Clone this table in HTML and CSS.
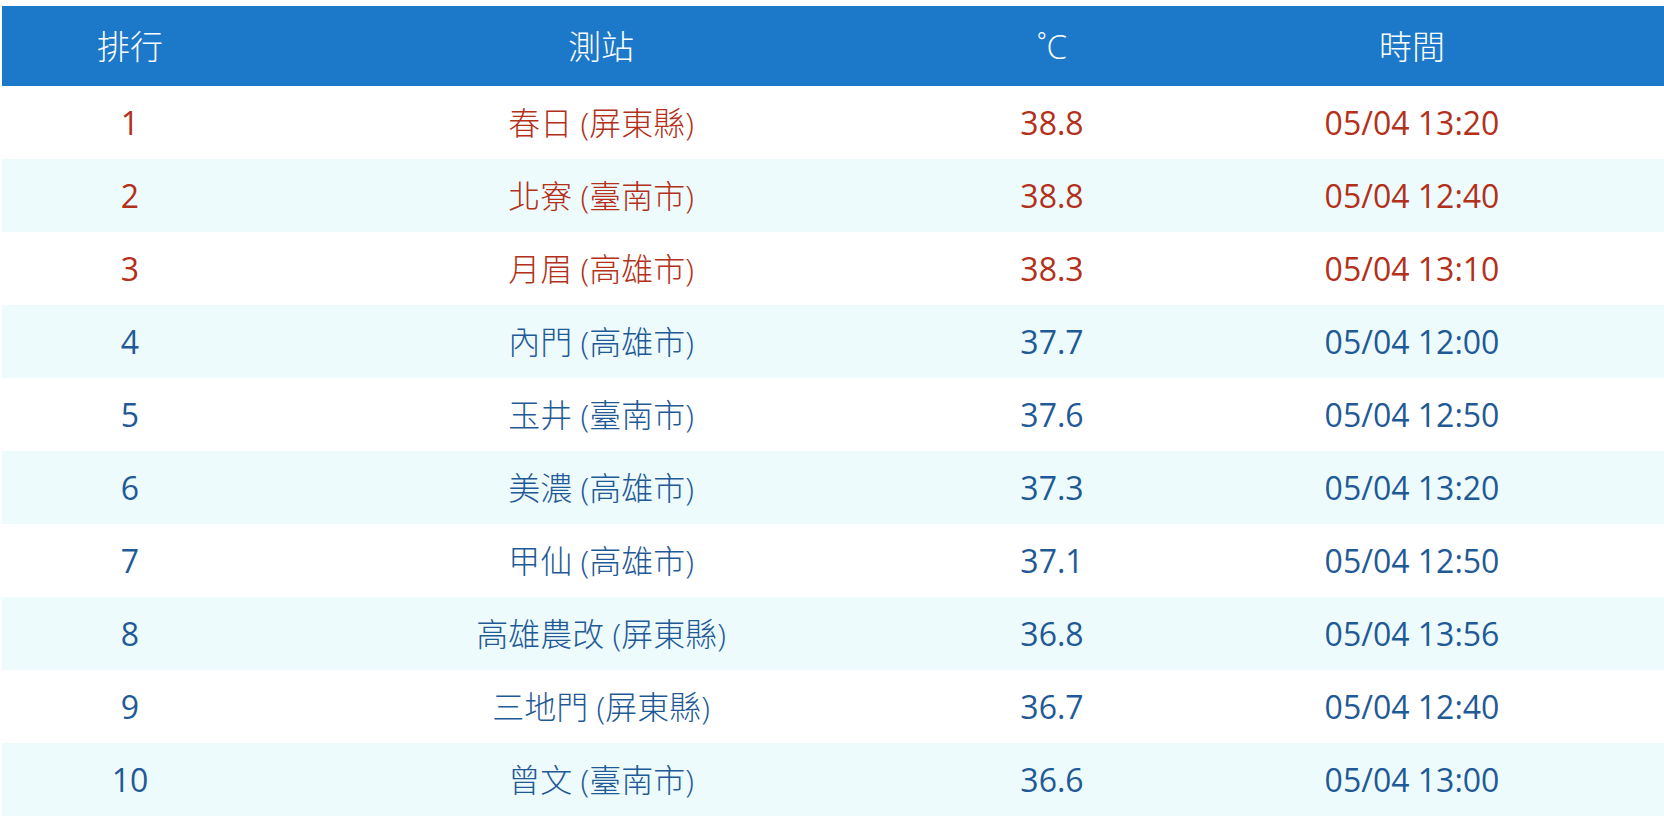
FILE: index.html
```html
<!DOCTYPE html>
<html lang="zh-Hant">
<head>
<meta charset="utf-8">
<title>排行</title>
<link rel="stylesheet" href="styles.css">
</head>
<body>
<div class="table">
  <div class="row head">
    <div class="cell">排行</div>
    <div class="cell">測站</div>
    <div class="cell">˚C</div>
    <div class="cell">時間</div>
  </div>
  <div class="row hot">
    <div class="cell num">1</div>
    <div class="cell">春日 (屏東縣)</div>
    <div class="cell num">38.8</div>
    <div class="cell num">05/04 13:20</div>
  </div>
  <div class="row hot alt">
    <div class="cell num">2</div>
    <div class="cell">北寮 (臺南市)</div>
    <div class="cell num">38.8</div>
    <div class="cell num">05/04 12:40</div>
  </div>
  <div class="row hot">
    <div class="cell num">3</div>
    <div class="cell">月眉 (高雄市)</div>
    <div class="cell num">38.3</div>
    <div class="cell num">05/04 13:10</div>
  </div>
  <div class="row alt">
    <div class="cell num">4</div>
    <div class="cell">內門 (高雄市)</div>
    <div class="cell num">37.7</div>
    <div class="cell num">05/04 12:00</div>
  </div>
  <div class="row">
    <div class="cell num">5</div>
    <div class="cell">玉井 (臺南市)</div>
    <div class="cell num">37.6</div>
    <div class="cell num">05/04 12:50</div>
  </div>
  <div class="row alt">
    <div class="cell num">6</div>
    <div class="cell">美濃 (高雄市)</div>
    <div class="cell num">37.3</div>
    <div class="cell num">05/04 13:20</div>
  </div>
  <div class="row">
    <div class="cell num">7</div>
    <div class="cell">甲仙 (高雄市)</div>
    <div class="cell num">37.1</div>
    <div class="cell num">05/04 12:50</div>
  </div>
  <div class="row alt">
    <div class="cell num">8</div>
    <div class="cell">高雄農改 (屏東縣)</div>
    <div class="cell num">36.8</div>
    <div class="cell num">05/04 13:56</div>
  </div>
  <div class="row">
    <div class="cell num">9</div>
    <div class="cell">三地門 (屏東縣)</div>
    <div class="cell num">36.7</div>
    <div class="cell num">05/04 12:40</div>
  </div>
  <div class="row alt">
    <div class="cell num">10</div>
    <div class="cell">曾文 (臺南市)</div>
    <div class="cell num">36.6</div>
    <div class="cell num">05/04 13:00</div>
  </div>
</div>
</body>
</html>
```
FILE: styles.css
```css
html, body {
  margin: 0;
  padding: 0;
  background: #ffffff;
}

body {
  font-family: "Open Sans", "Noto Sans CJK TC", sans-serif;
  font-size: 32px;
  font-weight: 300;
  color: #1f5a96;
}

.table {
  margin: 6px 0 0 2px;
  display: flex;
  flex-direction: column;
}

.row {
  display: grid;
  grid-template-columns: 256px 686px 216px 1fr;
  height: 73px;
  align-items: center;
}

.row.head {
  height: 80px;
  background: #1c78c8;
  color: #ffffff;
  font-size: 33px;
}

.row.alt {
  background: #eefbfd;
}

.row.hot {
  color: #b3301a;
}

.cell {
  text-align: center;
  line-height: 1;
  white-space: nowrap;
}

.cell.num {
  font-weight: 400;
}
```
